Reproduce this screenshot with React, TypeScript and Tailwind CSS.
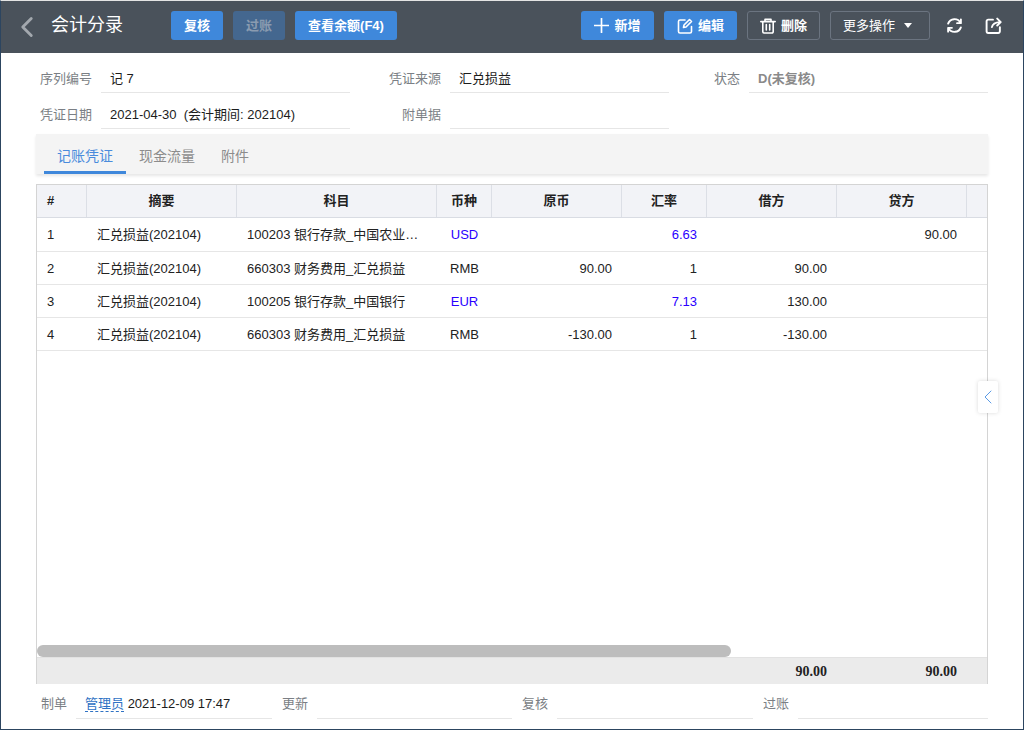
import { ChevronLeft } from 'lucide-react';

const FONT = 'font-["Liberation_Sans","Noto_Sans_CJK_SC",sans-serif]';

const COLS = 'grid grid-cols-[50px_150px_200px_55px_130px_85px_130px_130px_1fr]';

const ROWS = [
  { no: '1', memo: '汇兑损益(202104)', account: '100203 银行存款_中国农业银行', cur: 'USD', orig: '', rate: '6.63', debit: '', credit: '90.00', foreign: true },
  { no: '2', memo: '汇兑损益(202104)', account: '660303 财务费用_汇兑损益', cur: 'RMB', orig: '90.00', rate: '1', debit: '90.00', credit: '', foreign: false },
  { no: '3', memo: '汇兑损益(202104)', account: '100205 银行存款_中国银行', cur: 'EUR', orig: '', rate: '7.13', debit: '130.00', credit: '', foreign: true },
  { no: '4', memo: '汇兑损益(202104)', account: '660303 财务费用_汇兑损益', cur: 'RMB', orig: '-130.00', rate: '1', debit: '-130.00', credit: '', foreign: false },
];

function Icon({ d, className = 'w-[16px] h-[16px]', width = 1.6 }: { d: string; className?: string; width?: number }) {
  return (
    <svg viewBox="0 0 16 16" className={className} fill="none" stroke="currentColor" strokeWidth={width} strokeLinecap="round" strokeLinejoin="round">
      <path d={d} />
    </svg>
  );
}

function BlueButton({ children, className = '' }: { children: React.ReactNode; className?: string }) {
  return (
    <button type="button" className={`h-[29px] rounded-[3px] bg-[#3f88db] text-white font-bold text-[13px] flex items-center justify-center ${className}`}>
      {children}
    </button>
  );
}

function OutlineButton({ children, className = '' }: { children: React.ReactNode; className?: string }) {
  return (
    <button type="button" className={`h-[29px] rounded-[3px] border border-[#6b7480] text-white text-[13px] flex items-center justify-center ${className}`}>
      {children}
    </button>
  );
}

function Field({ label, value, labelW, w, className = '' }: { label: string; value?: string; labelW: string; w: string; className?: string }) {
  return (
    <div className="flex items-stretch h-[29px]">
      <div className={`${labelW} h-[29px] text-right text-[13px] text-[#7b7f85] leading-[30px]`}>{label}</div>
      <div className={`${w} ml-[9px] h-[29px] px-[9px] border-b border-[#e6e6e6] text-[13px] leading-[30px] whitespace-pre ${className || 'text-[#1c1c1c]'}`}>{value}</div>
    </div>
  );
}

function FootField({ label, w, children }: { label: string; w: string; children?: React.ReactNode }) {
  return (
    <div className="flex items-stretch h-[29px]">
      <div className="w-[26px] h-[29px] text-[13px] text-[#7b7f85] leading-[28px]">{label}</div>
      <div className={`${w} ml-[9px] h-[29px] px-[9px] border-b border-[#e6e6e6] text-[13px] leading-[28px] whitespace-nowrap text-[#1c1c1c]`}>{children}</div>
    </div>
  );
}

function HeadCell({ children, last, left }: { children?: React.ReactNode; last?: boolean; left?: boolean }) {
  return (
    <div className={`flex items-center font-bold text-[13px] text-[#222] ${left ? 'pl-[10px]' : 'justify-center'} ${last ? '' : 'border-r border-[#dcdfe6]'}`}>{children}</div>
  );
}

export default function App() {
  return (
    <div className={`${FONT} w-[1024px] h-[730px] overflow-hidden bg-white border-x border-b border-[#2c4560] border-t border-t-[#e4e4e4] flex flex-col relative`}>
      {/* toolbar */}
      <div className="h-[52px] shrink-0 bg-[#4a525b] flex items-center pl-[9px] pr-[21px] pb-[3px]">
        <ChevronLeft className="w-[34px] h-[34px] mt-[3px] text-[#a3a8ae]" strokeWidth={2} />
        <h1 className="ml-[7px] text-[18px] text-white w-[120px]">会计分录</h1>
        <div className="flex gap-[10px]">
          <BlueButton className="w-[52px]">复核</BlueButton>
          <button type="button" className="w-[52px] h-[29px] rounded-[3px] bg-[#44678f] text-[#8a9bb0] font-bold text-[13px]">过账</button>
          <BlueButton className="w-[102px]">查看余额(F4)</BlueButton>
        </div>
        <div className="ml-auto flex items-center">
          <BlueButton className="w-[73px] gap-[5px]">
            <Icon d="M8 .5v15M.5 8h15" className="w-[15px] h-[15px]" width={1.8} />
            新增
          </BlueButton>
          <BlueButton className="ml-[10px] w-[73px] gap-[5px]">
            <Icon d="M8 2H3a1.5 1.5 0 0 0-1.5 1.5v10A1.5 1.5 0 0 0 3 15h10a1.5 1.5 0 0 0 1.5-1.5V8.5M6.5 9.5l.5-2.5L12.5 1.5l2 2L9 9z" />
            编辑
          </BlueButton>
          <OutlineButton className="ml-[10px] w-[73px] gap-[5px] font-bold">
            <Icon d="M.8 3.6h14.4M5 3.6V1.4h6v2.2M2.8 3.6v10.2a1.2 1.2 0 0 0 1.2 1.2h8a1.2 1.2 0 0 0 1.2-1.2V3.6M6.3 6.5v5.5M9.7 6.5v5.5" />
            删除
          </OutlineButton>
          <OutlineButton className="ml-[10px] w-[100px] gap-[9px] pr-[5px]">
            更多操作
            <span className="w-0 h-0 border-x-[4px] border-x-transparent border-t-[5px] border-t-white" />
          </OutlineButton>
          <Icon d="M13.6 5.6A6.3 6.3 0 0 0 2 6.2M2.4 10.4A6.3 6.3 0 0 0 14 9.8M14 2.2v3.6h-3.6M2 13.8v-3.6h3.6" className="ml-[16px] w-[17px] h-[17px] text-white" width={1.8} />
          <Icon d="M7.5 2.5H3A1.5 1.5 0 0 0 1.5 4v9.5A1.5 1.5 0 0 0 3 15h9.5a1.5 1.5 0 0 0 1.5-1.5V9.5M6.5 9.5C7 6.5 9.5 5 14.5 4.8M11.5 1.5l3.3 3.3-3.3 3.2" className="ml-[22px] w-[17px] h-[17px] text-white" width={1.8} />
        </div>
      </div>

      {/* form */}
      <div className="pt-[11px] pl-[39px] flex flex-col gap-[7px]">
        <div className="flex">
          <Field label="序列编号" value="记 7" labelW="w-[52px]" w="w-[249px]" />
          <Field label="凭证来源" value="汇兑损益" labelW="w-[91px]" w="w-[219px]" />
          <Field label="状态" value="D(未复核)" labelW="w-[71px]" w="w-[239px]" className="text-[#8a8a8a] font-bold" />
        </div>
        <div className="flex">
          <Field label="凭证日期" value="2021-04-30  (会计期间: 202104)" labelW="w-[52px]" w="w-[249px]" />
          <Field label="附单据" labelW="w-[91px]" w="w-[219px]" />
        </div>
      </div>

      {/* tabs */}
      <div className="mt-[5px] ml-[35px] w-[952px] h-[40px] shrink-0 bg-[#f4f4f4] shadow-[0_2px_3px_rgba(0,0,0,0.1)] flex items-end pl-[8px]">
        <div className="w-[82px] h-[37px] pt-[9px] text-center text-[14px] text-[#4a8bdc] border-b-[3px] border-[#3f88db]">记账凭证</div>
        <div className="ml-[13px] h-[37px] pt-[9px] text-[14px] text-[#8c8c8c]">现金流量</div>
        <div className="ml-[26px] h-[37px] pt-[9px] text-[14px] text-[#8c8c8c]">附件</div>
      </div>

      {/* entries table */}
      <div className="mt-[10px] ml-[35px] w-[952px] h-[500px] shrink-0 border-x border-t border-[#d4d4d4] flex flex-col">
        <div className={`${COLS} h-[33px] shrink-0 bg-[#f2f3f7] border-b border-[#d9dce3]`}>
          <HeadCell left>#</HeadCell>
          <HeadCell>摘要</HeadCell>
          <HeadCell>科目</HeadCell>
          <HeadCell>币种</HeadCell>
          <HeadCell>原币</HeadCell>
          <HeadCell>汇率</HeadCell>
          <HeadCell>借方</HeadCell>
          <HeadCell>贷方</HeadCell>
          <HeadCell last />
        </div>
        <div className="flex-1">
          {ROWS.map((r) => (
            <div key={r.no} className={`${COLS} h-[33px] first:h-[34px] pt-[1px] border-b border-[#e6e6e6] items-center text-[13px] text-[#222]`}>
              <div className="pl-[10px]">{r.no}</div>
              <div className="pl-[10px]">{r.memo}</div>
              <div className="pl-[10px] pr-[18px] truncate">{r.account}</div>
              <div className={`text-center ${r.foreign ? 'text-[#2a00ff]' : ''}`}>{r.cur}</div>
              <div className="pr-[10px] text-right">{r.orig}</div>
              <div className={`pr-[10px] text-right ${r.foreign ? 'text-[#2a00ff]' : ''}`}>{r.rate}</div>
              <div className="pr-[10px] text-right">{r.debit}</div>
              <div className="pr-[10px] text-right">{r.credit}</div>
              <div />
            </div>
          ))}
        </div>
        <div className="h-[12px] shrink-0">
          <div className="w-[694px] h-[12px] rounded-full bg-[#bdbdbd]" />
        </div>
        <div className={`${COLS} h-[27px] shrink-0 bg-[#ebebeb] border-t border-[#e2e2e2] items-center text-[14px] font-bold font-["Liberation_Serif",serif] text-[#222]`}>
          <div className="col-start-7 pr-[10px] text-right">90.00</div>
          <div className="pr-[10px] text-right">90.00</div>
        </div>
      </div>

      {/* footer */}
      <div className="pt-[6px] pl-[40px] flex gap-[10px]">
        <FootField label="制单" w="w-[196px]">
          <span className="text-[#2f72c4] border-b border-dashed border-[#2f72c4]">管理员</span> 2021-12-09 17:47
        </FootField>
        <FootField label="更新" w="w-[195px]" />
        <FootField label="复核" w="w-[196px]" />
        <FootField label="过账" w="w-[190px]" />
      </div>

      {/* side collapse handle */}
      <div className="absolute left-[977px] top-[380px] w-[20px] h-[32px] bg-white rounded-[2px] shadow-[0_0_4px_rgba(0,0,0,0.15)] flex items-center justify-center">
        <ChevronLeft className="w-[24px] h-[24px] shrink-0 text-[#5b9be6]" strokeWidth={1} />
      </div>
    </div>
  );
}
